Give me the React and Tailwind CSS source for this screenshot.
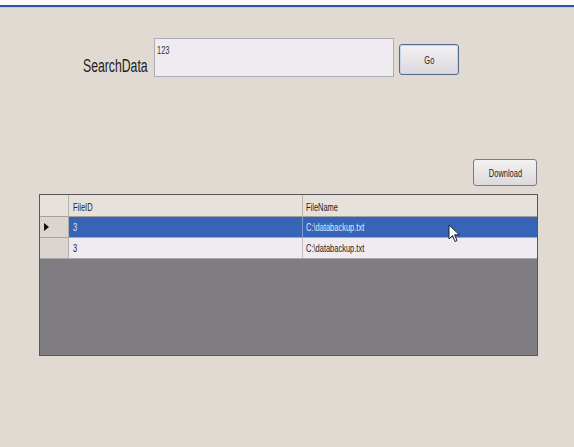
import React from "react";

// Narrow WinForms-style text: scaled horizontally so the glyphs match the squeezed capture
function T({ children, className = "", origin = "origin-left" }) {
  return <span className={`block w-max whitespace-nowrap scale-x-[0.68] ${origin} ${className}`}>{children}</span>;
}

const rows = [
  { id: "3", name: "C:\\databackup.txt", selected: true },
  { id: "3", name: "C:\\databackup.txt", selected: false },
];

export default function App() {
  return (
    <div
      className="relative w-[574px] h-[447px] overflow-hidden bg-[#e1dad3] text-[#222]"
      style={{ fontFamily: '"Liberation Sans", Arial, sans-serif' }}
    >
      <div className="h-[5px] bg-white" />
      <div className="h-[2px] bg-[#2d56a7]" />
      <div className="h-[1px] bg-[#c9cbd8]" />

      {/* search row */}
      <div className="flex mt-[30px]">
        <div className="w-[154px] pl-[83px] pt-[18px]">
          <T className="text-[18px] leading-[20px] text-[#222]">SearchData</T>
        </div>
        <div className="w-[240px] h-[39px] border border-[#a9abb5] bg-[#efebf1] pl-[2px] pt-[5px]">
          <T className="text-[11px] leading-[12px] text-[#333]">123</T>
        </div>
        <button className="ml-[5px] mt-[6px] w-[60px] h-[31px] rounded-[3px] border border-[#55698f] bg-gradient-to-b from-[#f4f1f4] to-[#dcd8de] flex items-center justify-center shadow-[inset_0_0_0_1px_#c9d4ea]">
          <T origin="origin-center" className="text-[11px] leading-[12px] text-[#222]">Go</T>
        </button>
      </div>

      {/* download */}
      <div className="flex mt-[82px] pl-[473px]">
        <button className="w-[64px] h-[27px] rounded-[3px] border border-[#7a7c84] bg-gradient-to-b from-[#f3f0f2] to-[#dedadc] flex items-center justify-center">
          <T origin="origin-center" className="text-[11px] leading-[12px] text-[#222]">Download</T>
        </button>
      </div>

      {/* data grid */}
      <div className="ml-[39px] mt-[8px] w-[499px] h-[162px] border border-[#59565a] bg-[#807d82] flex flex-col">
        <div className="flex h-[22px] bg-[#e7e1dc] border-b border-[#a5a09c]">
          <div className="w-[29px] border-r border-[#b7b1ac]" />
          <div className="w-[234px] border-r border-[#b7b1ac] pl-[4px] flex items-center pt-[3px]">
            <T className="text-[11px] leading-[12px] text-[#222]">FileID</T>
          </div>
          <div className="flex-1 pl-[3px] flex items-center pt-[3px]">
            <T className="text-[11px] leading-[12px] text-[#222]">FileName</T>
          </div>
        </div>
        {rows.map((r, i) => (
          <div key={i} className="flex h-[21px] border-b border-[#a8a4a8]">
            <div className="w-[29px] bg-[#dcd5cf] border-r border-[#b2aca7] flex items-center pl-[4px]">
              {r.selected && (
                <svg width="5" height="8" viewBox="0 0 5 8">
                  <path d="M0 0 L5 4 L0 8 Z" fill="#111" />
                </svg>
              )}
            </div>
            <div
              className={`w-[234px] border-r pl-[4px] flex items-center ${
                r.selected ? "bg-[#3764b6] border-[#7f9bd0] text-[#e2e8f6]" : "bg-[#efebf1] border-[#c4c0c4] text-[#222]"
              }`}
            >
              <T className="text-[11px] leading-[12px]">{r.id}</T>
            </div>
            <div
              className={`flex-1 pl-[3px] flex items-center ${
                r.selected ? "bg-[#3764b6] text-[#e2e8f6]" : "bg-[#efebf1] text-[#222]"
              }`}
            >
              <T className="text-[11px] leading-[12px]">{r.name}</T>
            </div>
          </div>
        ))}
      </div>

      {/* mouse pointer */}
      <svg className="absolute left-[448px] top-[224px]" width="13" height="20" viewBox="0 0 13 20">
        <path
          d="M1 1 L1 15 L4.5 11.5 L7 17.5 L9 16.6 L6.6 10.8 L11.4 10.8 Z"
          fill="#fff"
          stroke="#222"
          strokeWidth="1"
          strokeLinejoin="round"
        />
      </svg>
    </div>
  );
}
